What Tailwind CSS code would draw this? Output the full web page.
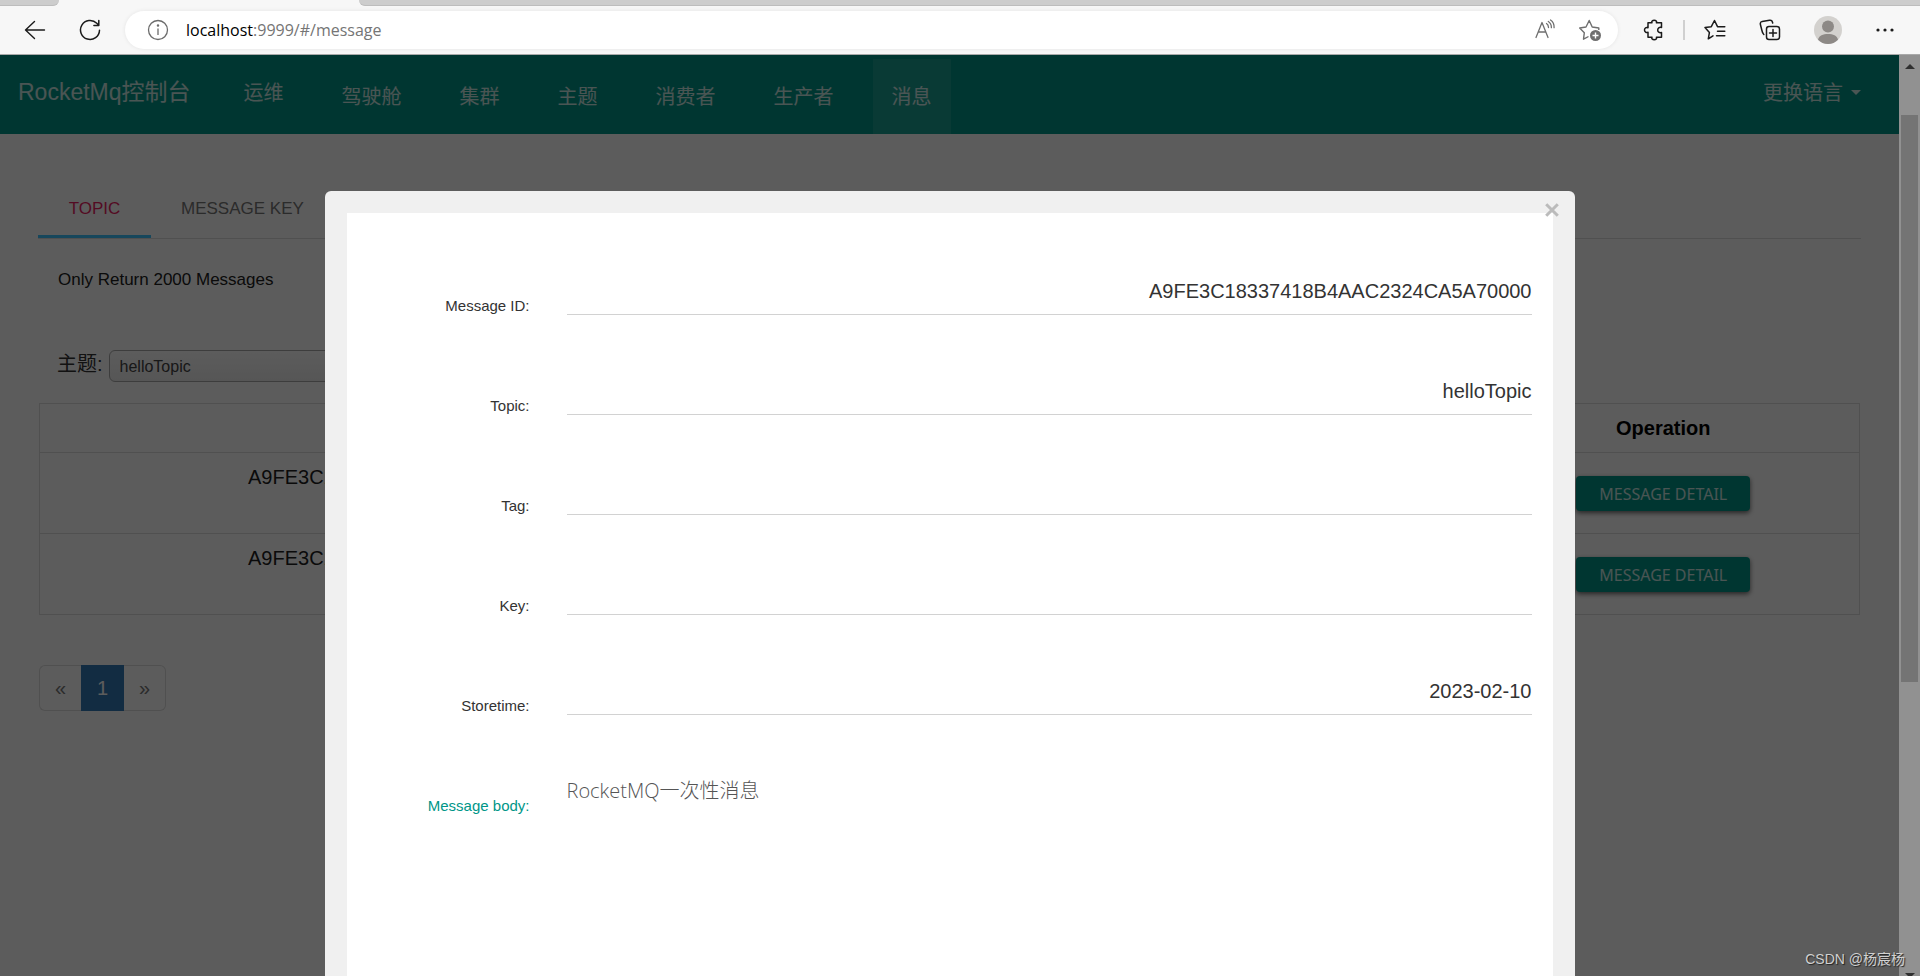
<!DOCTYPE html>
<html lang="zh-CN">
<head>
<meta charset="utf-8">
<title>RocketMq控制台</title>
<script src="https://cdn.jsdelivr.net/npm/@tailwindcss/browser@4"></script>
</head>
<body class="flex h-screen flex-col overflow-hidden bg-white font-['Liberation_Sans','Noto_Sans_CJK_SC',sans-serif] text-black">

<!-- Browser toolbar -->
<header class="relative shrink-0 border-b border-[#a9a9a9] bg-[#f7f7f7]">
  <div class="flex h-[6px] justify-between">
    <div class="w-[59px] rounded-br-md border-b border-[#bdbdbd] bg-[#cdcdcd]"></div>
    <div class="ml-[300px] flex-1 rounded-bl-md border-b border-[#bdbdbd] bg-[#cdcdcd]"></div>
  </div>
  <div class="flex h-12 items-center pr-[26px] pl-6">
    <button aria-label="Back" class="mr-[33px]"><svg class="block size-[22px]" viewBox="0 0 22 22" fill="none" stroke="#1b1b1b" stroke-width="1.4" stroke-linecap="round" stroke-linejoin="round"><path d="M20.500 11H1.500M10.500 2.500 1.500 11l9 8.500"/></svg></button>
    <button aria-label="Refresh" class="mr-6"><svg class="block size-[22px]" viewBox="0 0 22 22" fill="none" stroke="#1b1b1b" stroke-width="1.500" stroke-linecap="round" stroke-linejoin="round"><path d="M20.500 11.200A9.500 9.500 0 1 1 17.800 4.300L19.800 6.300M19.800 1.500v4.900h-4.900"/></svg></button>
    <div class="flex h-[38px] flex-1 items-center rounded-full bg-white pr-4 pl-[22px] shadow-[0_0_4px_rgba(0,0,0,0.08)]">
      <svg class="mr-[17px] block size-[22px]" viewBox="0 0 22 22" fill="none" stroke="#6b6b6b" stroke-width="1.3"><circle cx="11" cy="11" r="9.500"/><path d="M11 9.500v6.500"/><circle cx="11" cy="6.500" r=".6" fill="#6b6b6b"/></svg>
      <div class="flex-1 font-['Open_Sans',sans-serif] text-base leading-6 text-[#757575]"><span class="text-black">localhost</span>:9999/#/message</div>
      <button aria-label="Read aloud" class="mr-[22px]"><svg class="block size-[22px]" viewBox="0 0 22 22" fill="none" stroke="#6f6f6f" stroke-width="1.300" stroke-linecap="round" stroke-linejoin="round"><path d="M2 18.500 8 3.500l6 15M4.200 13h7.600M12.500 4.500c1.300.8 2 2.300 2 4M14.300 2.500c2 1.200 3.100 3.500 3.100 6.200M16.500 1c2.500 1.700 3.800 4.400 3.600 7.700"/></svg></button>
      <button aria-label="Add to favorites"><svg class="block size-[24px]" viewBox="0 0 24 24" fill="none" stroke="#6f6f6f" stroke-width="1.400" stroke-linejoin="round"><path d="M10.500 18.500 5.500 21.200 6.300 14.800 1.700 10 8 9 11.200 2.500 14.200 9l6.600 1v2"/><circle cx="17.500" cy="17.500" r="5.500" fill="#6f6f6f" stroke="none"/><path d="M17.500 14.500v6M14.500 17.500h6" stroke="#fff"/></svg></button>
    </div>
    <button aria-label="Extensions" class="ml-[25px]"><svg class="block size-[22px]" viewBox="0 0 22 22" fill="none" stroke="#1b1b1b" stroke-width="1.500" stroke-linejoin="round"><path d="M5 3.800h4C8.200 2.200 9.500 1.200 11.200 1.200s3 1 2.200 2.600H18.500V8.500c-2.300-.6-3.800.6-3.800 2.500s1.500 3.100 3.800 2.500v4.700H13.400c.8 1.600-.5 2.600-2.200 2.600S8.200 19.800 9 18.200H5V13.200c-1.800.8-3.500-.5-3.500-2.200S3.200 8 5 8.800Z"/></svg></button>
    <span class="mr-[19px] ml-[18px] h-5 w-[2px] bg-[#d0d0d0]"></span>
    <button aria-label="Favorites"><svg class="block size-[22px]" viewBox="0 0 22 22" fill="none" stroke="#1b1b1b" stroke-width="1.500" stroke-linejoin="round" stroke-linecap="round"><path d="M9 16.800 4.300 19.800 5.400 13.600 1 8.500 7.300 7.700 10.500 1.500 13.500 7.700h7.300M13.500 12.200h7.300M12.500 16.800h8.300"/></svg></button>
    <button aria-label="Collections" class="ml-[33px]"><svg class="block size-[22px]" viewBox="0 0 22 22" fill="none" stroke="#1b1b1b" stroke-width="1.500" stroke-linecap="round" stroke-linejoin="round"><rect x="7.500" y="7.500" width="13" height="13" rx="2.500"/><path d="M14 10.500v7M10.500 14h7M4.800 15.500C3.500 14.500 3.200 13 2.800 11L1.400 5.500C1 3.800 1.700 2.800 3.200 2.400L10.500 1.200c1.700-.3 2.800.5 3.200 2.800"/></svg></button>
    <button aria-label="Profile" class="ml-[33px]"><svg class="block size-7" viewBox="0 0 28 28"><circle cx="14" cy="14" r="14" fill="#d3d1ce"/><circle cx="14" cy="10.500" r="6" fill="#8d8986"/><path d="M4 23.700C5 19.500 9 18 14 18s9 1.500 10 5.700A14 14 0 0 1 4 23.700Z" fill="#8d8986"/></svg></button>
    <button aria-label="Settings and more" class="ml-[34px]"><svg class="block h-[22px] w-[18px]" viewBox="0 0 18 22" fill="#1b1b1b"><circle cx="2" cy="11" r="1.600"/><circle cx="9" cy="11" r="1.600"/><circle cx="16" cy="11" r="1.600"/></svg></button>
  </div>
</header>

<div class="flex min-h-0 flex-1">
  <div class="relative min-w-0 flex-1 overflow-hidden bg-white">
    <!-- Page -->
    <nav class="flex h-[79px] items-start bg-[#009688] pr-[38px] pl-[18px] text-xl text-white/80">
      <a href="#/" class="mr-[34px] flex h-[75px] items-center text-[23px]">RocketMq控制台</a>
      <div class="flex flex-1 gap-5">
        <a href="#/ops" class="flex h-[75px] items-center px-[19px]">运维</a>
        <a href="#/dashboard" class="mt-1 flex h-[75px] items-center px-[19px]">驾驶舱</a>
        <a href="#/cluster" class="mt-1 flex h-[75px] items-center px-[19px]">集群</a>
        <a href="#/topic" class="mt-1 flex h-[75px] items-center px-[19px]">主题</a>
        <a href="#/consumer" class="mt-1 flex h-[75px] items-center px-[19px]">消费者</a>
        <a href="#/producer" class="mt-1 flex h-[75px] items-center px-[19px]">生产者</a>
        <a href="#/message" class="mt-1 flex h-[75px] items-center bg-white/10 px-[19px]">消息</a>
      </div>
      <button class="flex h-[75px] items-center gap-2">更换语言
        <svg class="block h-[5px] w-[10px]" viewBox="0 0 10 5" fill="currentColor"><path d="M0 0h10L5 5Z"/></svg>
      </button>
    </nav>

    <main class="px-[38px] pt-[46px]">
      <div class="flex h-[59px] border-b border-[#dddddd] text-[17px] leading-6">
        <button class="flex w-[113px] items-start justify-center border-b-3 border-[#40c4ff] pt-[17px] text-[#e91e63]">TOPIC</button>
        <button class="flex items-start px-[30px] pt-[17px] text-[#777777]">MESSAGE KEY</button>
      </div>
      <p class="mt-[29px] px-5 text-[17px] leading-6 text-[#212121]">Only Return 2000 Messages</p>
      <div class="mt-[58px] flex h-8 items-start gap-[6px] px-[19px]">
        <label for="topic" class="text-xl leading-7 text-[#333333]">主题:</label>
        <select id="topic" class="h-8 w-[360px] appearance-none rounded-md border border-[#aaaaaa] bg-linear-to-b from-white to-[#eeeeee] px-[10px] pt-[2px] text-base text-[#444444]"><option>helloTopic</option></select>
      </div>

      <div class="mt-[21px] px-px">
        <table class="w-full table-fixed border-collapse border border-[#dddddd] text-xl leading-7">
          <colgroup><col class="w-[799px]"><col class="w-[10%]"><col class="w-[10%]"><col><col class="w-[392px]"></colgroup>
          <thead>
            <tr class="border border-[#dddddd]"><th class="p-[10px]">Message ID</th><th class="p-[10px]">Tag</th><th class="p-[10px]">Key</th><th class="p-[10px]">StoreTime</th><th class="p-[10px]">Operation</th></tr>
          </thead>
          <tbody class="text-center align-top text-[#212121]">
            <tr class="border border-[#dddddd]">
              <td class="p-[10px]">A9FE3C18337418B4AAC2324CA5A70000</td><td></td><td></td><td class="p-[10px]">2023-02-10</td>
              <td class="px-[10px] pt-[23px] pb-[22px]"><button class="mx-auto block h-[35px] rounded-sm bg-[#009688] px-[23px] font-['Noto_Sans',sans-serif] text-base leading-5 text-white/80 shadow-[0_2px_5px_rgba(0,0,0,0.6)]">MESSAGE DETAIL</button></td>
            </tr>
            <tr class="border border-[#dddddd]">
              <td class="p-[10px]">A9FE3C18337418B4AAC2324CA5A70000</td><td></td><td></td><td class="p-[10px]">2023-02-10</td>
              <td class="px-[10px] pt-[23px] pb-[22px]"><button class="mx-auto block h-[35px] rounded-sm bg-[#009688] px-[23px] font-['Noto_Sans',sans-serif] text-base leading-5 text-white/80 shadow-[0_2px_5px_rgba(0,0,0,0.6)]">MESSAGE DETAIL</button></td>
            </tr>
          </tbody>
        </table>
        <div class="mt-[50px] flex h-[46px] text-xl text-[#777777]">
          <a href="#prev" class="flex w-[42px] items-center justify-center rounded-l-md border border-r-0 border-[#dddddd]">«</a>
          <a href="#1" class="flex w-[43px] items-center justify-center bg-[#337ab7] text-white">1</a>
          <a href="#next" class="flex w-[42px] items-center justify-center rounded-r-md border border-l-0 border-[#dddddd]">»</a>
        </div>
      </div>
    </main>

    <!-- Dialog over a dimmed page -->
    <div class="absolute inset-0 flex items-start justify-center bg-black/64 pt-[136px]">
      <section role="dialog" aria-label="Message detail" class="relative h-[900px] w-[1250px] max-w-full shrink-0 rounded-md bg-[#f0f0f0] p-[22px]">
        <button aria-label="Close" class="absolute top-[12px] right-4"><svg class="block size-[14px]" viewBox="0 0 14 14" fill="none" stroke="#bbbbbb" stroke-width="3"><path d="M1.200 1.200l11.600 11.600M12.800 1.200 1.200 12.800"/></svg></button>
        <form class="flex h-full flex-col gap-[52px] bg-white pt-[55px] pr-[21px] text-[#333333]">
          <div class="flex items-start gap-[37px]"><label for="f-id" class="w-[183px] pt-7 text-right text-[15px] leading-5">Message ID:</label><input id="f-id" readonly class="h-[47px] min-w-0 flex-1 border-b border-[#d2d2d2] text-right text-xl" value="A9FE3C18337418B4AAC2324CA5A70000"></div>
          <div class="flex items-start gap-[37px]"><label for="f-topic" class="w-[183px] pt-7 text-right text-[15px] leading-5">Topic:</label><input id="f-topic" readonly class="h-[47px] min-w-0 flex-1 border-b border-[#d2d2d2] text-right text-xl" value="helloTopic"></div>
          <div class="flex items-start gap-[37px]"><label for="f-tag" class="w-[183px] pt-7 text-right text-[15px] leading-5">Tag:</label><input id="f-tag" readonly class="h-[47px] min-w-0 flex-1 border-b border-[#d2d2d2] text-right text-xl" value=""></div>
          <div class="flex items-start gap-[37px]"><label for="f-key" class="w-[183px] pt-7 text-right text-[15px] leading-5">Key:</label><input id="f-key" readonly class="h-[47px] min-w-0 flex-1 border-b border-[#d2d2d2] text-right text-xl" value=""></div>
          <div class="flex items-start gap-[37px]"><label for="f-time" class="w-[183px] pt-7 text-right text-[15px] leading-5">Storetime:</label><input id="f-time" readonly class="h-[47px] min-w-0 flex-1 border-b border-[#d2d2d2] text-right text-xl" value="2023-02-10"></div>
          <div class="flex items-start gap-[37px]"><label for="f-body" class="w-[183px] pt-7 text-right text-[15px] leading-5 text-[#009688]">Message body:</label><textarea id="f-body" readonly class="h-[190px] min-w-0 flex-1 resize-none pt-[9px] font-['Open_Sans','Noto_Sans_CJK_SC',sans-serif] text-xl leading-7 font-light text-[#555555]">RocketMQ一次性消息</textarea></div>
        </form>
      </section>
    </div>
  </div>

  <!-- Scrollbar -->
  <div class="flex w-[21px] shrink-0 flex-col items-center justify-between bg-[#919191] pt-[9px]">
    <svg class="block h-[5px] w-[10px] shrink-0" viewBox="0 0 10 5" fill="#303030"><path d="M0 5h10L5 0Z"/></svg>
    <div class="mt-[46px] mb-auto w-[17px] basis-[567px] bg-[#747474]"></div>
    <svg class="block h-[3px] w-[10px] shrink-0" viewBox="0 0 10 3" fill="#303030"><path d="M0 0h10L7 3H3Z"/></svg>
  </div>
</div>

<div class="absolute right-[15px] bottom-[5px] text-sm leading-6 text-[#d0d0d0] [text-shadow:1px_1px_1px_#222]">CSDN @杨宸杨</div>
</body>
</html>
